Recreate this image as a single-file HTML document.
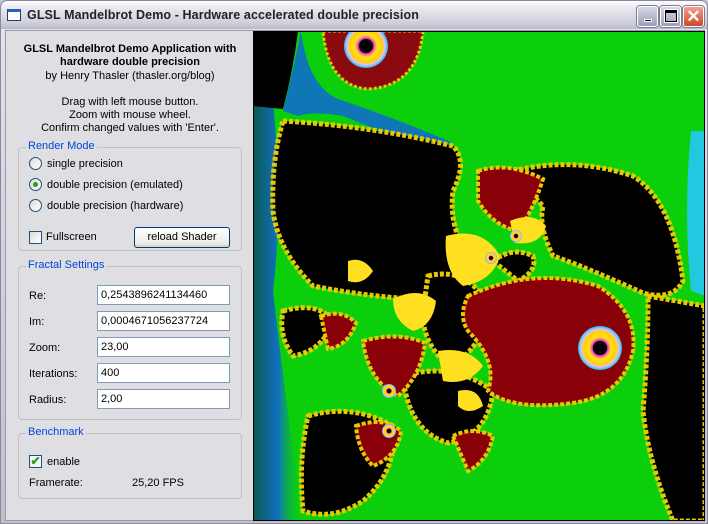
<!DOCTYPE html>
<html><head><style>
*{margin:0;padding:0;box-sizing:border-box}
body{width:708px;height:524px;overflow:hidden;background:#c8c8d4;font-family:"Liberation Sans",Tahoma,sans-serif;font-size:11px;color:#000;position:relative}
.win{position:absolute;left:0;top:0;width:708px;height:524px;border:1px solid #8a8a9c;border-radius:7px 7px 0 0;background:linear-gradient(#e4e4ec,#c0c0cc)}
.title{position:absolute;left:0;top:0;width:706px;height:28px;border-radius:7px 7px 0 0;background:linear-gradient(#fdfdfd 0%,#e6e6ee 30%,#cfcfdb 80%,#b8b8c8 100%)}
.title .t{position:absolute;left:26px;top:7px;font-size:12.5px;font-weight:bold;color:#222;letter-spacing:.1px}
.ico{position:absolute;left:6px;top:8px;width:14px;height:12px;border:1px solid #245;background:#fff;border-top:3px solid #2a5fc0}
.btn{position:absolute;top:5px;width:21px;height:21px;border:1px solid #fff;border-radius:3px;background:linear-gradient(#d6d7e4,#9c9eb8);box-shadow:0 0 0 1px #7a7c98}
.client{position:absolute;left:4px;top:29px;width:700px;height:491px;background:#dfdfe3;border:1px solid #9a9aaa}
.c{position:absolute;left:0;width:248px;text-align:center;line-height:13px}
.gb{position:absolute;left:12px;width:224px;border:1px solid #c2c0c0;border-radius:4px}
.gb span{position:absolute;left:7px;top:-8px;background:#dfdfe3;color:#0046d5;padding:0 2px}
.l{position:absolute}
.rad{position:absolute;width:13px;height:13px;border:1px solid #1c5180;border-radius:50%;background:linear-gradient(135deg,#dcdcd6,#fff)}
.inp{position:absolute;left:91px;width:133px;height:20px;border:1px solid #7f9db9;background:#fff;padding:3px 0 0 3px}
</style></head><body>
<div class="win">
<div class="title"><div class="ico"></div><div class="t">GLSL Mandelbrot Demo - Hardware accelerated double precision</div>
<div class="btn" style="left:636px"><div style="position:absolute;left:6px;top:12px;width:8px;height:3px;background:#000;border:1px solid #fff"></div></div>
<div class="btn" style="left:659px"><div style="position:absolute;left:4px;top:3px;width:12px;height:12px;border:1px solid #000;border-top:3px solid #000;box-shadow:0 0 0 1px #fff"></div></div>
<div class="btn" style="left:682px;background:linear-gradient(#f0a090,#d04828);color:#fff;font-size:17px;font-weight:bold;text-align:center;line-height:19px">✕</div>
</div>
<div class="client">
<div class="c" style="top:12px;font-weight:bold">GLSL Mandelbrot Demo Application with<br>hardware double precision</div>
<div class="c" style="top:39px">by Henry Thasler (thasler.org/blog)</div>
<div class="c" style="top:65px">Drag with left mouse button.<br>Zoom with mouse wheel.<br>Confirm changed values with 'Enter'.</div>
<div class="gb" style="top:116px;height:104px"><span>Render Mode</span></div>
<div class="rad" style="left:23px;top:126px"></div><div class="l" style="left:41px;top:127px">single precision</div>
<div class="rad" style="left:23px;top:147px"><div style="position:absolute;left:3px;top:3px;width:5px;height:5px;border-radius:50%;background:#21a121"></div></div><div class="l" style="left:41px;top:148px">double precision (emulated)</div>
<div class="rad" style="left:23px;top:168px"></div><div class="l" style="left:41px;top:169px">double precision (hardware)</div>
<div class="l" style="left:23px;top:200px;width:13px;height:13px;border:1px solid #1c5180;background:linear-gradient(135deg,#dcdcd6,#fff)"></div><div class="l" style="left:40px;top:200px">Fullscreen</div>
<div class="l" style="left:128px;top:196px;width:96px;height:21px;border:1px solid #003c74;border-radius:3px;background:linear-gradient(#fff,#ecebe6 80%,#d6d0c5);text-align:center;line-height:19px">reload Shader</div>
<div class="gb" style="top:235px;height:154px"><span>Fractal Settings</span></div>
<div class="l" style="left:23px;top:259px">Re:</div><div class="inp" style="top:254px">0,2543896241134460</div>
<div class="l" style="left:23px;top:285px">Im:</div><div class="inp" style="top:280px">0,0004671056237724</div>
<div class="l" style="left:23px;top:311px">Zoom:</div><div class="inp" style="top:306px">23,00</div>
<div class="l" style="left:23px;top:337px">Iterations:</div><div class="inp" style="top:332px">400</div>
<div class="l" style="left:23px;top:363px">Radius:</div><div class="inp" style="top:358px">2,00</div>
<div class="gb" style="top:402px;height:66px"><span>Benchmark</span></div>
<div class="l" style="left:23px;top:424px;width:13px;height:13px;border:1px solid #1c5180;background:#f4f4f0;color:#21a121;font-size:12px;font-weight:bold;line-height:11px;text-align:center">✔</div><div class="l" style="left:41px;top:425px">enable</div>
<div class="l" style="left:23px;top:446px">Framerate:</div><div class="l" style="left:126px;top:446px">25,20 FPS</div>
<svg class="l" style="left:247px;top:0" width="452" height="490" viewBox="0 0 452 490">
<defs>
<linearGradient id="b" x1="0" x2="1"><stop offset="0" stop-color="#0a5a50"/><stop offset="0.5" stop-color="#1070c0"/><stop offset="1" stop-color="#0ccf0c" stop-opacity="0"/></linearGradient>
<radialGradient id="sp"><stop offset="0.3" stop-color="#000"/><stop offset="0.35" stop-color="#ff30d0"/><stop offset="0.5" stop-color="#ffe020"/><stop offset="0.75" stop-color="#ffd000"/><stop offset="0.85" stop-color="#e0c0ff"/><stop offset="1" stop-color="#20c0e0"/></radialGradient>
</defs>
<rect width="452" height="490" fill="#0ccf0c"/>
<path d="M0 70 L20 70 Q30 180 20 260 Q30 350 50 490 L0 490Z" fill="url(#b)"/>
<path d="M48 0 Q55 55 85 68 Q150 90 200 112 L200 122 Q150 110 90 85 Q60 80 45 85 L30 80 Q40 40 48 0Z" fill="#1060e0" opacity="0.8"/>
<path d="M0 0 L45 0 Q40 40 30 78 L0 75Z" fill="#000"/>
<path d="M70 0 L170 0 Q165 55 115 58 Q75 55 70 0Z" fill="#8a0a10" stroke="#e8c800" stroke-width="3" stroke-dasharray="3 2"/>
<circle cx="113" cy="15" r="22" fill="url(#sp)"/>
<circle cx="113" cy="15" r="6" fill="#000"/>
<path d="M438 100 L452 100 L452 265 L438 260 Q430 180 438 100Z" fill="#20c8e0"/>
<g stroke="#e8c800" stroke-width="5" stroke-dasharray="4 2" fill="#000">
<path d="M30 90 Q120 95 200 115 Q215 130 200 160 Q195 200 220 230 Q200 260 160 268 Q110 265 60 255 Q25 220 20 180 Q18 130 30 90Z"/>
<path d="M260 140 Q320 125 380 145 Q420 170 430 250 Q420 270 390 262 Q330 235 300 225 Q285 195 290 175 Q275 160 260 140Z"/>
<path d="M395 265 L452 275 L452 490 L420 490 Q395 430 390 380 Q395 320 395 265Z"/>
<path d="M175 245 Q215 235 235 275 Q230 320 195 335 Q168 310 170 280Z"/>
<path d="M150 345 Q200 330 240 360 Q235 405 195 412 Q155 400 150 345Z"/>
<path d="M55 385 Q100 372 140 395 Q145 440 110 470 Q80 490 50 480 Q45 430 55 385Z"/>
<path d="M30 280 Q65 270 80 290 Q70 320 40 325 Q25 305 30 280Z"/>
<path d="M240 230 Q260 215 280 225 Q285 240 265 250Z"/>
</g>
<g fill="#8a0008" stroke="#e8c800" stroke-width="4" stroke-dasharray="4 2">
<path d="M215 265 Q280 235 345 255 Q385 280 380 320 Q370 365 320 372 Q260 380 235 360 Q245 330 215 300 Q205 285 215 265Z"/>
<path d="M225 140 Q255 130 290 148 Q280 180 265 200 Q240 195 225 170Z"/>
<path d="M110 310 Q145 300 172 312 Q168 345 145 365 Q115 350 110 310Z"/>
<path d="M68 285 Q90 278 103 292 Q95 315 75 318Z"/>
<path d="M103 395 Q130 385 148 400 Q145 425 120 435 Q105 420 103 395Z"/>
<path d="M200 405 Q220 395 240 405 Q235 430 215 440Z"/>
</g>
<g fill="#ffe020">
<path d="M193 205 Q230 195 247 225 Q240 250 210 255 Q190 240 193 205Z"/>
<path d="M140 268 Q165 255 183 270 Q180 295 160 300 Q140 290 140 268Z"/>
<path d="M257 190 Q280 180 293 195 Q288 215 262 212Z"/>
<path d="M185 320 Q215 315 230 335 Q215 355 190 350Z"/>
<path d="M205 360 Q225 355 230 375 Q215 385 205 375Z"/>
<path d="M95 230 Q110 225 120 240 Q110 255 95 250Z"/>
</g>
<circle cx="347" cy="317" r="22" fill="url(#sp)"/>
<circle cx="347" cy="317" r="7" fill="#000"/>
<circle cx="136" cy="360" r="7" fill="url(#sp)"/>
<circle cx="136" cy="400" r="7" fill="url(#sp)"/>
<circle cx="238" cy="227" r="6" fill="url(#sp)"/>
<circle cx="263" cy="205" r="6" fill="url(#sp)"/>
<rect x="0" y="0" width="452" height="490" fill="none" stroke="#000" stroke-width="2"/>
</svg>
</div>
</div>
</body></html>
